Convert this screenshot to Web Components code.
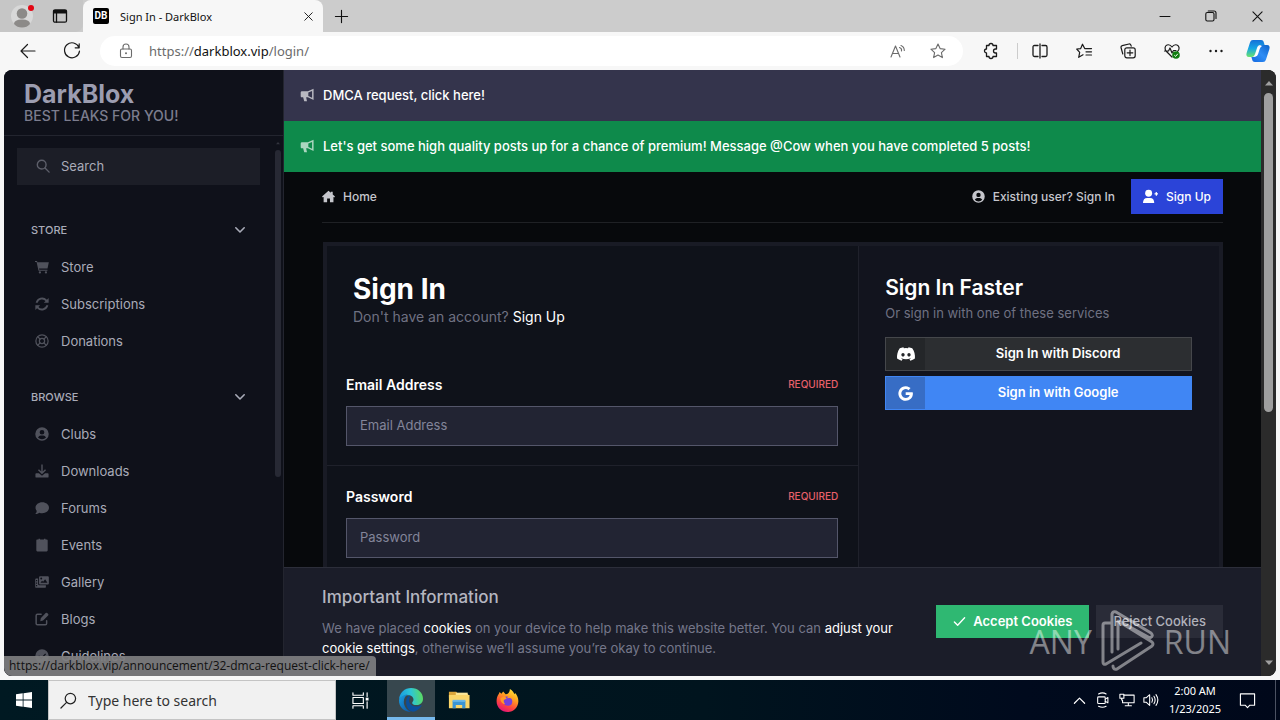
<!DOCTYPE html>
<html lang="en">
<head>
<meta charset="utf-8">
<title>Sign In - DarkBlox</title>
<style>
html, body { margin: 0; height: 100%; }
body { font-family: "Inter", "Liberation Sans", sans-serif; font-size: 13px; overflow: hidden; }
</style>
</head>
<body>
<desktop-screen></desktop-screen>
<script>
const RESET = `*{box-sizing:border-box}a{color:inherit;text-decoration:none}button,input{font:inherit;color:inherit;border:0;background:none;padding:0;margin:0;border-radius:0}button{display:inline-flex;align-items:center;justify-content:center}h1,h2,h3,p,ul{margin:0;padding:0}ul{list-style:none}input:focus{outline:none}`;
const define = (name, css, html) => customElements.define(name, class extends HTMLElement {
  constructor() {
    super();
    this.attachShadow({ mode: 'open' }).innerHTML = `<style>${RESET}${css}</style>${typeof html === 'function' ? html(this) : html}`;
  }
});

/* name: [viewBox size, markup]. "s" wraps stroked line icons. */
const s = (d, w = 1) => `<g fill="none" stroke="currentColor" stroke-width="${w}" stroke-linecap="round" stroke-linejoin="round">${d}</g>`;
const ICONS = {
  back: [16, s('<path d="M15 8H1M7.500 1.500L1 8l6.500 6.500"/>', 1.2)],
  reload: [16, s('<path d="M15 4.500A7.500 7.500 0 1 0 15.500 8M15.200 .8v4h-4"/>', 1.2)],
  lock: [16, s('<rect x="2.500" y="6" width="11" height="8.500" rx="1.500"/><path d="M5 6V4a3 3 0 0 1 6 0v2"/>', 1.1) + '<circle cx="8" cy="10.200" r="1"/>'],
  read: [16, s('<path d="M1 14L5.500 3 10 14M2.600 10.500h5.800M9.500 4.500a3 3 0 0 1 2 3.500M11 2.500c2 .8 3.300 2.500 3.300 5"/>', 1.1)],
  star: [16, s('<path d="M8 1l2.100 4.600 5 .6-3.700 3.400 1 5L8 12.100l-4.400 2.500 1-5L.9 6.200l5-.6z"/>', 1.1)],
  puzzle: [16, s('<path d="M4.500 2.500h2.500a2 2 0 0 1 4 0h3.500v3.500h-1a2 2 0 0 0 0 4h1v3.500h-3.500a2 2 0 0 1-4 0H4.500V10a2 2 0 0 1 0-4z"/>', 1.3)],
  split: [16, s('<path d="M6 2.500H2.500q-1.500 0-1.500 1.500v8q0 1.500 1.500 1.500H6M10 2.500h3.500q1.500 0 1.500 1.500v8q0 1.500-1.500 1.500H10M8 1v14"/>', 1.3)],
  favs: [16, s('<path d="M9.500 5.600H8.700L6.500 1.200 4.700 5.600.7 6l3 3.300-1 5L7 11.700M10 5.600h5.500M10 8.800h5.500M10 12h5.500"/>', 1.2)],
  collect: [16, s('<rect x="4.800" y="4.800" width="10.400" height="10" rx="2"/><path d="M10 7v5.600M7.200 9.800h5.600M2.800 11L1 4.500Q.7 3 2.200 2.600L9 1q1.500-.2 1.900 1.200l.3 1"/>', 1.2)],
  heart: [16, s('<path d="M13.500 8.500C15.800 6.500 15.600 3 13 2 10.500 1.200 9 2.500 8 4 7 2.500 5.500 1.200 3 2 .6 3 .6 6 2 8l6 6M.5 8h4l1.500-3 2 5 1.500-2.500h2.500"/>', 1.2) + '<circle cx="12" cy="12" r="3.800" fill="#107c10"/><path d="M10.300 12.200l1.300 1.200 2.200-2.600" fill="none" stroke="#fff"/>'],
  dots: [16, '<circle cx="2.500" cy="8" r="1.200"/><circle cx="8" cy="8" r="1.200"/><circle cx="13.500" cy="8" r="1.200"/>'],
  copilot: [24, '<defs><linearGradient id="a" x1="0" y1="0" x2="0" y2="1"><stop offset="0" stop-color="#1570d8"/><stop offset=".5" stop-color="#16a6e4"/><stop offset="1" stop-color="#6be36c"/></linearGradient><linearGradient id="b" x1="1" y1="0" x2="0" y2="1"><stop offset="0" stop-color="#0d61c8"/><stop offset=".5" stop-color="#2f8df5"/><stop offset="1" stop-color="#1368e0"/></linearGradient></defs><path fill="url(#a)" d="M7 1h8c2 0 2.600 1 3 3l.6 2h-4c-2 0-3 1-3.600 3l-2 6c-.6 2-1.500 3-3.500 3H3c-2.500 0-3-2-2.400-4L4 3.500C4.600 1.800 5.500 1 7 1z"/><path fill="url(#b)" d="M17 23H9c-2 0-2.600-1-3-3l-.6-2h2.100c2 0 3-1 3.600-3l2-6c.6-2 1.500-3 3.500-3H21c2.500 0 3 2 2.400 4L20 20.500c-.6 1.700-1.500 2.500-3 2.500z"/><path fill="#fff" d="M11.500 9.500q.8-2.500 2.800-2.500h1.700q-1.600.8-2.300 3l-1.600 5q-.8 2.500-2.800 2.500H7.700q1.600-.8 2.300-3z"/>'],
  profile: [24, '<circle cx="12" cy="12" r="11" fill="#d8d8d8"/><circle cx="12" cy="9.500" r="5.300" fill="#8c8a88"/><path d="M4 20q0-4.500 8-4.500t8 4.500q-3 3.500-8 3.500T4 20z" fill="#8c8a88"/><circle cx="21" cy="4" r="3" fill="#e30613"/>'],
  tabs: [16, s('<rect x="1.500" y="1.800" width="13" height="12.400" rx="1.500"/><path d="M4.500 5v9"/>', 1.3) + '<path d="M1.500 2h13v3.500h-13z"/>'],
  plus: [16, s('<path d="M8 1.500v13M1.500 8h13"/>', 1.2)],
  close: [12, s('<path d="M1 1l10 10M11 1L1 11"/>', 1.2)],
  min: [12, s('<path d="M1 6.500h10"/>', 1)],
  max: [12, s('<rect x=".8" y="2.500" width="8.200" height="8.500" rx="1.500"/><path d="M3.200 1H9q2 0 2 2v5.500"/>', 1.1)],
  search: [16, s('<circle cx="6.500" cy="6.500" r="5"/><path d="M10.300 10.300L15 15"/>', 1.6)],
  winsearch: [18, s('<circle cx="11" cy="7" r="5.500"/><path d="M7 11L1 17"/>', 1.3)],
  chev: [12, s('<path d="M1.800 3.800L6 8l4.200-4.200"/>', 1.6)],
  cart: [16, '<path d="M0 1h2.300l.4 1.500H15.800L14.300 9.700H4.600L4.900 11h9.300v1.300H4L1.800 2.300H0z"/><circle cx="5.600" cy="14.200" r="1.300"/><circle cx="12.500" cy="14.200" r="1.300"/>'],
  sync: [16, '<path d="M15.600 1.200v5.500h-5.500l2-2A5.300 5.300 0 0 0 3 6.500H.8A7.400 7.400 0 0 1 13.600 3.100zM.4 14.800V9.300h5.500l-2 2A5.300 5.300 0 0 0 13 9.500h2.200A7.400 7.400 0 0 1 2.400 12.900z"/>'],
  ring: [16, s('<circle cx="8" cy="8" r="7"/><circle cx="8" cy="8" r="3"/><path d="M3.200 3.200l2.600 2.600M12.800 3.200l-2.600 2.600M3.200 12.800l2.600-2.600M12.800 12.800l-2.600-2.600"/>', 1.4)],
  user: [16, '<path fill-rule="evenodd" d="M8 .3a7.700 7.700 0 1 0 0 15.400A7.700 7.700 0 0 0 8 .3zM8 3.300a2.700 2.700 0 1 1 0 5.400 2.700 2.700 0 0 1 0-5.400zM3.400 12.100q1.300-2.400 3-2.400h3.200q1.700 0 3 2.400A6.200 6.200 0 0 1 8 14a6.200 6.200 0 0 1-4.600-1.900z"/>'],
  download: [16, '<path d="M7.200 .5h1.600v8l2.700-2.600 1.100 1.100L8 11.600 3.400 7l1.100-1.100 2.700 2.600zM1.500 10.500h3l3.500 3 3.500-3h3q1 0 1 1v3q0 1-1 1h-13q-1 0-1-1v-3q0-1 1-1z"/>'],
  bubble: [16, '<path d="M8.300 1.500c4.300 0 7.700 2.800 7.700 6.200s-3.400 6.200-7.700 6.200c-1.200 0-2.300-.2-3.300-.6-1.200.9-2.800 1.600-4.700 1.600 1-1 1.600-2.200 1.700-3.500C1.100 10.400.6 9.100.6 7.700c0-3.400 3.400-6.200 7.700-6.200z"/>'],
  calendar: [16, '<path d="M2 1.800h2V.8h1.800v1h4.400v-1H12v1h1.500q1 0 1 1V14q0 1.300-1.200 1.300H2.700Q1.500 15.300 1.500 14V2.500z"/>'],
  gallery: [18, '<path fill-rule="evenodd" d="M6.500 1.500h10q1.300 0 1.300 1.300v8q0 1.300-1.300 1.300h-10q-1.300 0-1.300-1.300v-8q0-1.300 1.300-1.300zM7 10h9l-3-4.500-2.500 3.200L9 7.500zM8 3.300A1.200 1.200 0 1 0 8 5.800 1.200 1.200 0 0 0 8 3.300z"/><path d="M4 4.500H1.500Q.3 4.500.3 5.800V15q0 1.500 1.400 1.500h11q1.300 0 1.300-1.500v-1.700H5.500Q4 13.300 4 11.500zM1.300 6.500h1.500V8H1.300zm0 3.200h1.500v1.500H1.300zm0 3.300h1.500v1.500H1.300z" fill-rule="evenodd"/>'],
  edit: [16, s('<path d="M7 2.700H2.800q-1.500 0-1.500 1.500v9q0 1.500 1.500 1.500h9q1.500 0 1.500-1.500V10"/>', 1.7) + '<path d="M12.200 1.200q.9-.9 1.800 0l1 1q.9.900 0 1.800l-5.800 5.800-3.200.7.600-3.300z"/>'],
  check: [16, '<path fill-rule="evenodd" d="M8 .3a7.700 7.700 0 1 0 0 15.400A7.700 7.700 0 0 0 8 .3zM4.700 7.300L7.200 9.700 11.600 5l1.100 1.100-5.500 5.700-3.600-3.400z"/>'],
  tick: [14, s('<path d="M1.500 7.500l3.500 3.500 7.500-8"/>', 1.5)],
  horn: [16, '<path fill-rule="evenodd" d="M15.500 .8v13L9 10.700H7l1 4.500H4.800l-1.200-4.500H2.200Q.8 10.700.8 9.300V5q0-1.400 1.400-1.400H9zM9.500 5.200v3.900l4.300 2V3.300z"/>'],
  home: [16, '<path d="M8 .8l2.800 2.500V2h2.400v3.400L16 8l-1 1.100-.9-.7V15H9.800v-4.500H6.300V15H2V8.400l-.9.700L0 8z"/>'],
  userplus: [16, '<circle cx="6" cy="4.500" r="3.700"/><path d="M0 15q0-5.500 4.500-5.500h3q4.500 0 4.500 5.500zM12.300 4.500v1.400h1.300v1.400h1.300V5.900H16V4.500h-1.200V3.200h-1.300v1.300z"/>'],
  discord: [24, '<path d="M20.300 4.400a19.800 19.800 0 0 0-4.900-1.500l-.7 1.300a18 18 0 0 0-5.500 0l-.7-1.300A19.700 19.700 0 0 0 3.700 4.400C.5 9-.3 13.600.1 18.100a20 20 0 0 0 6.100 3l1.200-2-1.900-1 .4-.4a14.200 14.200 0 0 0 12.200 0l.4.400-1.900 1 1.200 2a19.900 19.900 0 0 0 6.100-3c.5-5.200-.8-9.700-3.600-13.700zM8 15.300c-1.200 0-2.200-1.100-2.200-2.400s1-2.400 2.200-2.400 2.200 1.100 2.200 2.400-1 2.400-2.200 2.400zm8 0c-1.200 0-2.200-1.100-2.200-2.400s1-2.400 2.200-2.400 2.200 1.100 2.200 2.400-1 2.400-2.200 2.400z"/>'],
  google: [16, '<path d="M15.600 6.600H8.200v2.900h4.300c-.5 2.100-2.200 3.200-4.300 3.200a4.700 4.700 0 1 1 3-8.300l2.200-2.200A7.800 7.800 0 1 0 8.200 15.800c4.300 0 7.700-3 7.700-7.700q0-.8-.3-1.500z"/>'],
  start: [16, '<path d="M0 2.200L6.700 1.300v6.300H0zM7.500 1.200L16 0v7.600H7.500zM0 8.400h6.700v6.300L0 13.800zM7.500 8.400H16V16l-8.500-1.200z"/>'],
  taskview: [18, s('<path d="M1 .8v2.700h11V.8M1 17.200v-2.700h11v2.700"/><rect x="1" y="5.800" width="11" height="6.400"/><path d="M16 .8v4M16 10.500v6.700"/>', 1.2) + '<path d="M14.500 6h3v3h-3z"/>'],
  edge: [24, '<defs><linearGradient id="a" x1="0" y1=".4" x2="1" y2=".3"><stop offset="0" stop-color="#189be0"/><stop offset=".5" stop-color="#2dc6d7"/><stop offset="1" stop-color="#5ddc5b"/></linearGradient><linearGradient id="b" x1="0" y1="0" x2="1" y2="1"><stop offset="0" stop-color="#1aa0e3"/><stop offset="1" stop-color="#0c4f9e"/></linearGradient></defs><path fill="url(#a)" d="M0 11.500C.4 4.800 5.600 0 12.200 0 19 0 24 4.900 24 10.700c0 4-3 6.300-6.500 6.300-2.700 0-4.300-1-4.300-2.100 0-.8 1.300-1.500 1.300-3.400 0-2.300-2-4.300-5.300-4.300-4.700 0-8 2.500-9.200 4.300z"/><path fill="url(#b)" d="M0 12c.6-3 4.500-5.500 8.700-5.500-2.500 1.200-3.900 4.100-3.900 7.500 0 4.200 3 8.300 7.600 9.900C5.500 24.200-.4 18.800 0 12z"/><path fill="#0b4f9c" d="M9.500 8c-4 3-3.300 13.800 4.200 15.800 3.800-.5 7-2.800 8.800-6.100.2-.5-.2-.7-.5-.5-6 3.200-12.400-.5-12-5.300q.2-2 1.300-3.200z"/>'],
  folder: [24, '<path fill="#dba53a" d="M1 3h8l2 2.500h11v4H1z"/><path fill="#fbd669" d="M1 6.500h22.500V21H1z"/><path fill="#fce89a" d="M8.500 4h13v2.500h-13z"/><path fill="#3a95d6" d="M5 13h14v8h-3.500v-3.500h-7V21H5z"/><path fill="#6cb8e8" d="M5 11.800h14v2.200H5z"/>'],
  firefox: [24, '<defs><linearGradient id="a" x1=".8" y1="0" x2=".3" y2="1"><stop offset="0" stop-color="#ffe93a"/><stop offset=".35" stop-color="#ffa420"/><stop offset=".7" stop-color="#ff453d"/><stop offset="1" stop-color="#e3127a"/></linearGradient></defs><path fill="url(#a)" d="M14.500 0c3 1.600 4.300 4 4.500 5.600l1-1.300c2.300 2.600 3.500 5.400 3.300 8.900C23 19.400 18 24 12 24S.6 19.300.6 12.800C.6 9.600 1.500 6.800 3 5l.8-2L5.600 5l1.900-2.400 2.500 3C12.500 5.500 14.300 3.500 14.500 0z"/><path fill="#7540dc" d="M7 9.500q2.500-2.500 6-1.500-2 .5-1 1.700 5-1.500 5 3.300 0 4.500-4.800 4.500Q6.500 17 7 9.500z"/><path fill="#ff9a26" d="M4.500 10q3-3 5-2l1.700 1.800-3 1.700q-.8 2.500 1.300 4.500-4.500-.5-5-6z"/>'],
  up: [14, s('<path d="M1.500 10L7 4.500 12.500 10"/>', 1.3)],
  cam: [18, s('<rect x="3" y="5.500" width="8.500" height="7.500" rx="1"/><path d="M11.500 8l3-1.800v6L11.500 10.500M4 2.200q4.500-2.500 8.500 0M4 16q4.500 2.400 8.500 0"/>', 1.2)],
  net: [18, s('<path d="M5.500 3.500H17v8.500H4V9M10.500 12v3M7 15.500h7"/><rect x="1" y="2.500" width="4.500" height="4.500"/><path d="M3 7v2"/>', 1.2)],
  vol: [18, s('<path d="M1 6.500v5h2.500l4 3.500V3l-4 3.500zM10 6.500q1.500 2.500 0 5M12.300 4.800q2.700 4.200 0 8.400M14.600 3q4.200 6 0 12"/>', 1.2)],
  note: [18, s('<path d="M1.500 2h15v12h-5L9 16.500 6.500 14h-5z"/>', 1.2)],
  triup: [8, '<path d="M0 6.500L4 2l4 4.500z"/>'],
  tridown: [8, '<path d="M0 1.500L4 6l4-4.500z"/>'],
};
customElements.define('ui-icon', class extends HTMLElement {
  constructor() {
    super();
    const [box, body] = ICONS[this.getAttribute('name')];
    const size = this.getAttribute('size') || 16;
    this.attachShadow({ mode: 'open' }).innerHTML = `<style>:host{display:inline-flex;flex:none}svg{display:block;overflow:visible}</style><svg width="${size}" height="${size}" viewBox="0 0 ${box} ${box}" fill="currentColor" aria-hidden="true">${body}</svg>`;
  }
});

/* ---------- browser chrome ---------- */
define('tab-strip', `
:host{display:flex;height:32px;background:#ccc;color:#111;font:11px "Noto Sans","Open Sans",sans-serif}
.left{display:flex;align-items:center;gap:18px;width:83px;padding-left:10px;background:#c6c6c6;border-radius:0 0 8px 0}
.tab{display:flex;align-items:center;width:240px;padding:0 10px;background:#f7f7f7;border-radius:8px 8px 0 0}
.fav{width:16px;height:16px;margin-right:11px;background:#000;color:#fff;border-radius:2px;font:bold 10px/16px "Roboto",sans-serif;text-align:center}
.title{flex:1;white-space:nowrap}
.new{width:36px}.space{flex:1}.win{width:46px}`,
`<div class="left"><ui-icon name="profile" size="24"></ui-icon><ui-icon name="tabs"></ui-icon></div>
<div class="tab"><span class="fav">DB</span><span class="title">Sign In - DarkBlox</span><button aria-label="Close tab"><ui-icon name="close" size="9"></ui-icon></button></div>
<button class="new" aria-label="New tab"><ui-icon name="plus" size="15"></ui-icon></button><span class="space"></span>
<button class="win" aria-label="Minimize"><ui-icon name="min" size="12"></ui-icon></button><button class="win" aria-label="Restore"><ui-icon name="max" size="12"></ui-icon></button><button class="win" aria-label="Close"><ui-icon name="close" size="11"></ui-icon></button>`);

define('address-bar', `
:host{display:flex;align-items:center;height:38px;background:#f7f7f7;color:#1b1b1b;font:13px "Noto Sans","Open Sans",sans-serif}
button{width:44px;height:30px;flex:none}
.back{width:56px}
.reload{width:32px;margin-right:12px}
.pill{display:flex;align-items:center;flex:1;height:30px;border-radius:15px;background:#fff;padding-left:18px;color:#6b6b6b}
.pill div{flex:1;margin-left:15px}.pill b{font-weight:400;color:#111}
.pill button{width:40px}.pill button:last-child{margin-right:5px}
.ext{width:54px}.bar{width:1px;height:16px;background:#ccc}
.copilot{width:40px;margin-right:2px}`,
`<button class="back" aria-label="Back"><ui-icon name="back"></ui-icon></button><button class="reload" aria-label="Refresh"><ui-icon name="reload"></ui-icon></button>
<div class="pill"><ui-icon name="lock"></ui-icon><div role="textbox" aria-label="Address">https://<b>darkblox.vip</b>/login/</div><button aria-label="Read aloud"><ui-icon name="read"></ui-icon></button><button aria-label="Add to favorites"><ui-icon name="star"></ui-icon></button></div>
<button class="ext" aria-label="Extensions"><ui-icon name="puzzle"></ui-icon></button><span class="bar"></span>
<button aria-label="Split screen"><ui-icon name="split"></ui-icon></button><button aria-label="Favorites"><ui-icon name="favs"></ui-icon></button><button aria-label="Collections"><ui-icon name="collect"></ui-icon></button><button aria-label="Browser essentials"><ui-icon name="heart"></ui-icon></button><button aria-label="Settings"><ui-icon name="dots" size="16"></ui-icon></button><button class="copilot" aria-label="Copilot"><ui-icon name="copilot" size="24"></ui-icon></button>`);

/* ---------- sidebar ---------- */
define('side-link', `
:host{display:block}
a{display:flex;align-items:center;height:37px;padding-left:31px;gap:8px;font-size:13px;color:#a9abb8}
span{display:flex;justify-content:center;width:22px;color:#50525c}`,
el => `<a href="#"><span><ui-icon name="${el.getAttribute('icon')}" size="14"></ui-icon></span><slot></slot></a>`);
define('side-group', `
:host{display:block;margin-bottom:19px}
h3{font-weight:500}
button{width:100%;height:37px;justify-content:space-between;padding:0 37px 0 27px;font-size:11px;font-weight:500;color:#a9abb8}
nav{margin-left:-4px}`,
el => `<h3><button>${el.getAttribute('label')}<ui-icon name="chev" size="12"></ui-icon></button></h3><nav><slot></slot></nav>`);
define('site-sidebar', `
:host{display:flex;flex-direction:column;width:280px;flex:none;background:#0f111a;border-right:1px solid #23252f;overflow:hidden}
header{height:66px;flex:none;padding:11px 20px 0;border-bottom:1px solid #23252f;color:#9c9db0}
header a{display:block;font-size:25px;font-weight:700;line-height:26px}
header p{font-size:14px;font-weight:500;line-height:18px;color:#7c7d8e}
.scroll{position:relative;flex:1;overflow:hidden;padding-top:12px}
.search{display:flex;align-items:center;height:37px;margin:0 23px 26px 13px;padding:0 0 2px 19px;gap:11px;background:#1c1e27;color:#5d5f6a}
.search input{flex:1;min-width:0;font-size:13px}.search input::placeholder{color:#a9abb8;opacity:1}
.bar{position:absolute;top:14px;right:2px;width:6px;height:327px;border-radius:3px;background:#272934}
.bar ui-icon{position:absolute;top:-9px;left:1px;color:#33353f}`,
`<header><a href="#">DarkBlox</a><p>BEST LEAKS FOR YOU!</p></header>
<div class="scroll"><label class="search"><ui-icon name="search" size="14"></ui-icon><input type="search" placeholder="Search" aria-label="Search"></label>
<side-group label="STORE"><side-link icon="cart">Store</side-link><side-link icon="sync">Subscriptions</side-link><side-link icon="ring">Donations</side-link></side-group>
<side-group label="BROWSE"><side-link icon="user">Clubs</side-link><side-link icon="download">Downloads</side-link><side-link icon="bubble">Forums</side-link><side-link icon="calendar">Events</side-link><side-link icon="gallery">Gallery</side-link><side-link icon="edit">Blogs</side-link><side-link icon="check">Guidelines</side-link></side-group>
<div class="bar"><ui-icon name="triup" size="4"></ui-icon></div></div>`);

/* ---------- main column ---------- */
define('announce-bar', `
:host{display:block;background:#34344c;color:#fff}
:host([tone=green]){background:#0e8a4b}
a{display:flex;align-items:center;gap:9px;height:51px;padding:0 16px 2px;font-size:13px;font-weight:500}
ui-icon{opacity:.65}`,
`<a href="#"><ui-icon name="horn" size="14"></ui-icon><slot></slot></a>`);
define('site-nav', `
:host{display:flex;align-items:center;height:51px;margin:0 38px;padding-bottom:2px;border-bottom:1px solid #1f2125;color:#c5c6cc;font-size:12px;font-weight:500}
a{display:flex;align-items:center;gap:8px}.grow{flex:1}
.up{height:35px;margin-left:16px;padding:0 12px;background:#2b44d8;color:#fff}`,
`<a href="#"><ui-icon name="home" size="13"></ui-icon>Home</a><span class="grow"></span><a href="#"><ui-icon name="user" size="13"></ui-icon>Existing user? Sign In</a><a class="up" href="#"><ui-icon name="userplus" size="15"></ui-icon>Sign Up</a>`);
define('form-field', `
:host{display:block;padding:20px 20px 19px 19px;border-bottom:1px solid #1f212b}
.row{display:flex;justify-content:space-between;align-items:center;height:20px;margin-bottom:12px;font-size:14px;font-weight:600;color:#fff}
.req{font-size:10px;font-weight:500;color:#e8606a}
input{display:block;width:100%;height:40px;padding:0 13px 2px;background:#222433;border:1px solid #54566a;font-size:13px;color:#fff}
input::placeholder{color:#83859a;opacity:1}`,
el => { const l = el.getAttribute('label'); return `<div class="row"><label for="f">${l}</label><span class="req">REQUIRED</span></div><input id="f" type="${el.getAttribute('type')}" placeholder="${l}">`; });
define('provider-button', `
:host{display:block;--bg:#2c2e31;--side:#242629;--edge:#45474b}
:host([kind=google]){--bg:#4086f4;--side:#376dc5;--edge:#4086f4}
button{width:100%;height:34px;background:var(--bg);border:1px solid var(--edge);color:#fff;font-size:13px;font-weight:600}
i{display:flex;align-items:center;justify-content:center;width:39px;height:32px;background:var(--side)}
span{flex:1;text-align:center;padding-bottom:2px}`,
el => `<button><i><ui-icon name="${el.getAttribute('kind')}" size="${el.getAttribute('kind') === 'discord' ? 18 : 15}"></ui-icon></i><span><slot></slot></span></button>`);
define('login-card', `
:host{display:grid;grid-template-columns:53fr 36fr;margin:19px 38px 0 39px;border:4px solid #191b25;background:#0f121a;height:600px}
.intro{padding:26px}
h1{font-size:28px;line-height:34px;font-weight:700;color:#fff}
p{font-size:14px;line-height:22px;color:#6f7182}p a{color:#fff}
aside{border-left:1px solid #1f212b;background:#12141e;padding:28px 27px 0 26px}
h2{font-size:21px;line-height:28px;font-weight:600;color:#fff}
aside p{font-size:13px;line-height:22px;margin-bottom:13px}
provider-button{margin-bottom:5px}`,
`<section><div class="intro"><h1>Sign In</h1><p>Don't have an account? <a href="#">Sign Up</a></p></div><form><form-field label="Email Address" type="email"></form-field><form-field label="Password" type="password"></form-field></form></section>
<aside><h2>Sign In Faster</h2><p>Or sign in with one of these services</p><provider-button kind="discord">Sign In with Discord</provider-button><provider-button kind="google">Sign in with Google</provider-button></aside>`);
define('cookie-bar', `
:host{display:flex;align-items:center;gap:33px;height:109px;flex:none;padding:0 38px 2px;background:#1b1d29;border-top:1px solid #2c2e3a;color:#75778a;font-size:13px}
div{flex:1}h2{font-size:17px;line-height:24px;font-weight:500;color:#b5b6c0;margin-bottom:9px}
p{line-height:20px}p a{color:#fff}
nav{display:flex;gap:7px}
button{height:33px;padding:0 17px;gap:7px;background:#2a2c38;color:#b0b1ba;font-weight:500}
button.ok{background:#2fb872;color:#fff;font-weight:600}`,
`<div><h2>Important Information</h2><p>We have placed <a href="#">cookies</a> on your device to help make this website better. You can <a href="#">adjust your cookie settings</a>, otherwise we’ll assume you’re okay to continue.</p></div><nav><button class="ok"><ui-icon name="tick" size="13"></ui-icon>Accept Cookies</button><button>Reject Cookies</button></nav>`);
define('page-scrollbar', `
:host{display:flex;flex-direction:column;align-items:center;width:15px;flex:none;background:#2b2b2b;color:#a0a0a0;padding:9px 0}
i{width:9px;height:319px;border-radius:5px;background:#9f9f9f;margin-top:6px}.grow{flex:1}`,
`<ui-icon name="triup" size="8"></ui-icon><i></i><span class="grow"></span><ui-icon name="tridown" size="8"></ui-icon>`);
define('web-page', `
:host{position:relative;display:flex;flex:1;min-height:0;margin:0 4px 4px;border-radius:8px;overflow:hidden;background:#07090c}
main{display:flex;flex-direction:column;flex:1;min-width:0}
.content{flex:1;min-height:0;overflow:hidden}
.status{position:absolute;left:0;bottom:0;padding:0 6px 0 5px;height:20px;font:12px/20px "Open Sans","Noto Sans",sans-serif;color:#111;background:rgba(125,125,127,.93);border-radius:0 4px 0 0;white-space:nowrap}`,
`<site-sidebar></site-sidebar><main><div class="content"><announce-bar>DMCA request, click here!</announce-bar><announce-bar tone="green">Let's get some high quality posts up for a chance of premium! Message @Cow when you have completed 5 posts!</announce-bar><site-nav></site-nav><login-card></login-card></div><cookie-bar></cookie-bar></main><page-scrollbar></page-scrollbar><div class="status">https://darkblox.vip/announcement/32-dmca-request-click-here/</div>`);

/* ---------- desktop ---------- */
define('task-bar', `
:host{display:flex;height:40px;flex:none;background:linear-gradient(90deg,#001922,#00141e 55%,#000a1d 80%,#00081a);color:#fff;font:11px "Noto Sans","Open Sans",sans-serif}
button{width:48px}
label{display:flex;align-items:center;gap:11px;width:288px;padding-left:11px;background:#f1f1f1;border:1px solid #c4c4c4;color:#222}
label input{flex:1;min-width:0;font-size:14px}input::placeholder{color:#333;opacity:1}
.gap{width:3px}.on{background:#37474e;border-bottom:3px solid #76b9ed;padding-top:3px}
.grow{flex:1}.tray{width:24px}
time{width:64px;text-align:center;line-height:18px;padding-top:2px}
.note{padding-right:8px}
.end{width:5px;border-left:1px solid #4b5262}`,
`<button aria-label="Start"><ui-icon name="start"></ui-icon></button><label><ui-icon name="winsearch" size="17"></ui-icon><input placeholder="Type here to search" aria-label="Type here to search"></label>
<button aria-label="Task view"><ui-icon name="taskview" size="17"></ui-icon></button><span class="gap"></span><button class="on" aria-label="Edge"><ui-icon name="edge" size="24"></ui-icon></button><button aria-label="File Explorer"><ui-icon name="folder" size="22"></ui-icon></button><button aria-label="Firefox"><ui-icon name="firefox" size="23"></ui-icon></button>
<span class="grow"></span><button class="tray" aria-label="Hidden icons"><ui-icon name="up" size="13"></ui-icon></button><button class="tray" aria-label="Camera"><ui-icon name="cam"></ui-icon></button><button class="tray" aria-label="Network"><ui-icon name="net"></ui-icon></button><button class="tray" aria-label="Volume"><ui-icon name="vol"></ui-icon></button>
<time>2:00 AM<br>1/23/2025</time><button class="note" aria-label="Notifications"><ui-icon name="note" size="17"></ui-icon></button><span class="end"></span>`);
define('any-mark', `
:host{position:absolute;right:49px;bottom:47px;display:flex;align-items:center;gap:9px;height:64px;color:#fff;opacity:.45;font:400 32px "Open Sans","Roboto",sans-serif;pointer-events:none}
svg{flex:none}`,
`<span>ANY</span><svg width="54" height="64" viewBox="0 0 54 64" fill="none" stroke="currentColor" stroke-width="3" stroke-linejoin="round" stroke-linecap="round"><path d="M11 43V5q1-3 4-2l35 21q3 3-1 5L20 13M11 14H4q-2 0-2 2v37q0 3 3 2l35-21M17 40V12l34 21q2 2 0 4L16 60q-4 1-4-3"/></svg><span>RUN</span>`);
define('desktop-screen', `
:host{position:relative;display:flex;flex-direction:column;height:100vh;overflow:hidden}
.window{display:flex;flex-direction:column;flex:1;min-height:0;background:#f7f7f7}`,
`<div class="window"><tab-strip></tab-strip><address-bar></address-bar><web-page></web-page></div><task-bar></task-bar><any-mark></any-mark>`);
</script>
</body>
</html>
